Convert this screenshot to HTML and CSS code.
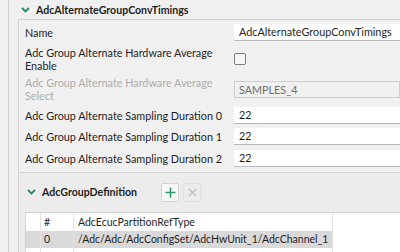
FILE: index.html
```html
<!DOCTYPE html>
<html lang="en">
  <head>
    <meta charset="UTF-8" />
    <title>AdcAlternateGroupConvTimings</title>
    <link rel="stylesheet" href="styles.css">
  </head>
  <body>
    <div class="outer">
      <div class="section-head">
        <svg class="chevron" width="9" height="6" viewBox="0 0 9 6"><polyline points="1,1 4.5,4.5 8,1" /></svg>
        <span class="title">AdcAlternateGroupConvTimings</span>
      </div>
      <div class="panel">
        <div class="form">
          <div class="label">Name</div>
          <div class="field"><div class="input">AdcAlternateGroupConvTimings</div></div>

          <div class="label">Adc Group Alternate Hardware Average Enable</div>
          <div class="field"><span class="checkbox"></span></div>

          <div class="label disabled">Adc Group Alternate Hardware Average Select</div>
          <div class="field"><div class="input readonly">SAMPLES_4</div></div>

          <div class="label">Adc Group Alternate Sampling Duration 0</div>
          <div class="field"><div class="input">22</div></div>

          <div class="label">Adc Group Alternate Sampling Duration 1</div>
          <div class="field"><div class="input">22</div></div>

          <div class="label">Adc Group Alternate Sampling Duration 2</div>
          <div class="field"><div class="input">22</div></div>
        </div>

        <div class="sub">
          <div class="sub-head">
            <svg class="chevron" width="9" height="6" viewBox="0 0 9 6"><polyline points="1,1 4.5,4.5 8,1" /></svg>
            <span class="title">AdcGroupDefinition</span>
            <button class="tool add">
              <svg width="11" height="11" viewBox="0 0 11 11"><path d="M5.5 0.5v10M0.5 5.5h10" /></svg>
            </button>
            <button class="tool remove">
              <svg width="9" height="9" viewBox="0 0 9 9"><path d="M1 1l7 7M8 1l-7 7" /></svg>
            </button>
          </div>
          <div class="table">
            <div class="row head">
              <div class="cell c0"></div>
              <div class="cell c1">#</div>
              <div class="cell c2">AdcEcucPartitionRefType</div>
              <div class="cell c3"></div>
            </div>
            <div class="row selected">
              <div class="cell c0"></div>
              <div class="cell c1">0</div>
              <div class="cell c2">/Adc/Adc/AdcConfigSet/AdcHwUnit_1/AdcChannel_1</div>
              <div class="cell c3"></div>
            </div>
            <div class="row">
              <div class="cell c0"></div>
              <div class="cell c1"></div>
              <div class="cell c2"></div>
              <div class="cell c3"></div>
            </div>
          </div>
        </div>
      </div>
    </div>
  </body>
</html>
```

FILE: styles.css
```css
body {
  margin: 0;
  background-color: #f0f0f0;
  font-family: Lato, "Noto Sans", sans-serif;
  font-size: 10.8px;
  color: #1e1e1e;
  overflow: hidden;
}
.outer {
  margin-left: 8px;
  border-left: 1px solid #d2d2d2;
  height: 252px;
  overflow: hidden;
}
.section-head {
  height: 19px;
  display: flex;
  align-items: center;
  padding-left: 12px;
}
.chevron {
  fill: none;
  stroke: #1f8a70;
  stroke-width: 1.8;
  margin-right: 6px;
}
.title {
  font-weight: bold;
  font-size: 10.6px;
}
.panel {
  margin-left: 9px;
  border-left: 1px solid #d2d2d2;
  border-top: 1px solid #d2d2d2;
}
.form {
  display: grid;
  grid-template-columns: 209px 1fr;
  row-gap: 4.5px;
  padding: 4px 0 0 6px;
}
.label {
  line-height: 13px;
  min-height: 17px;
  display: flex;
  align-items: center;
  padding-right: 4px;
}
.label.disabled {
  color: #adadad;
}
.field {
  display: flex;
  align-items: center;
}
.input {
  width: 100%;
  height: 17px;
  box-sizing: border-box;
  background: white;
  border-bottom: 1px solid #b8b8b8;
  padding-left: 5px;
  line-height: 16px;
  white-space: nowrap;
}
.input.readonly {
  background: #f0f0f0;
  border: 1px solid #cfcfcf;
  color: #6e6e6e;
  padding-left: 4px;
  line-height: 15px;
}
.checkbox {
  width: 10px;
  height: 10px;
  border: 1px solid #7a7a7a;
  border-radius: 2px;
  background: #f6f6f6;
}
.sub {
  margin-top: 5px;
  border-top: 1px solid #d2d2d2;
  background: #ececec;
}
.sub-head {
  height: 39px;
  display: flex;
  align-items: center;
  padding-left: 8px;
}
.sub-head .title {
  margin-right: 24px;
}
.tool {
  width: 18px;
  height: 19px;
  padding: 0;
  margin-right: 4px;
  border: 1px solid #d4d4d4;
  border-radius: 2px;
  background: #f7f7f7;
  display: flex;
  align-items: center;
  justify-content: center;
}
.tool svg {
  fill: none;
  stroke-width: 1.6;
}
.add svg {
  stroke: #2e9a6a;
}
.remove {
  background: #ececec;
  border-color: #e0e0e0;
}
.remove svg {
  stroke: #c4c4c4;
}
.table {
  margin-left: 6px;
  background: white;
  border-top: 1px solid #d2d2d2;
  border-left: 1px solid #d2d2d2;
  height: 60px;
  font-size: 10.5px;
}
.row {
  display: flex;
  height: 17px;
  line-height: 17px;
}
.row.selected .c0,
.row.selected .c1,
.row.selected .c2 {
  background: #d9d9d9;
}
.row.head {
  height: 18px;
  line-height: 18px;
}
.cell {
  box-sizing: border-box;
  border-right: 1px solid #e4e4e4;
  white-space: nowrap;
  overflow: hidden;
}
.c0 {
  width: 15px;
}
.c1 {
  width: 33px;
  padding-left: 3px;
}
.c2 {
  width: 259px;
  padding-left: 4px;
}
.c3 {
  flex: 1;
  border-right: none;
}
```
